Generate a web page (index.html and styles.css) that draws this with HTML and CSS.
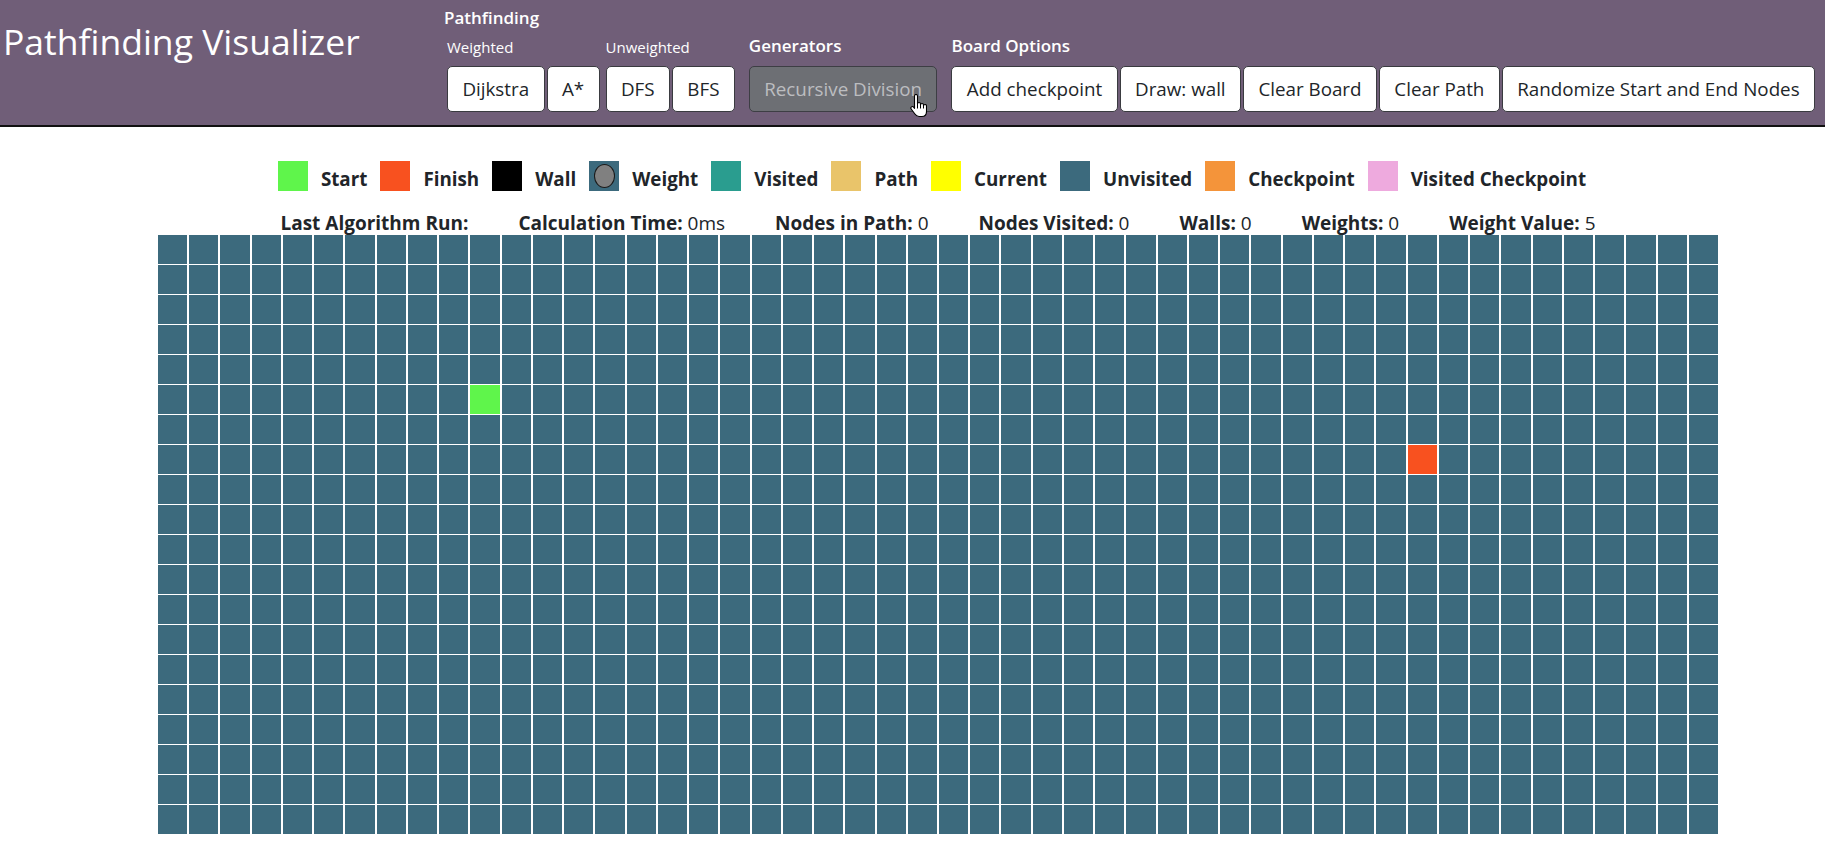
FILE: index.html
```html
<!DOCTYPE html>
<html lang="en">
<head>
<meta charset="utf-8">
<title>Pathfinding Visualizer</title>
<link rel="stylesheet" href="styles.css">
</head>
<body>
<header class="navbar">
  <div class="brand">Pathfinding Visualizer</div>
  <div class="group group-path">
    <div class="group-title">Pathfinding</div>
    <div class="subgroups">
      <div class="subgroup">
        <div class="sub-title">Weighted</div>
        <div class="btn-row">
          <button class="btn">Dijkstra</button>
          <button class="btn">A*</button>
        </div>
      </div>
      <div class="subgroup">
        <div class="sub-title">Unweighted</div>
        <div class="btn-row">
          <button class="btn">DFS</button>
          <button class="btn">BFS</button>
        </div>
      </div>
    </div>
  </div>
  <div class="group group-gen">
    <div class="group-title">Generators</div>
    <div class="btn-row">
      <button class="btn btn-disabled">Recursive Division
        <svg class="cursor" viewBox="0 0 18 24" width="18" height="24" aria-hidden="true">
          <path d="M5.5 2a1.5 1.5 0 0 1 3 0v8a1.5 1.5 0 0 1 3 0v1a1.5 1.5 0 0 1 3 0v1a1.5 1.5 0 0 1 3 0v5.5c0 3-1.8 5-4.5 5H10c-2 0-3.2-1-4.3-2.7L2.2 15a1.5 1.5 0 0 1 2.4-1.8l0.9 1.1Z" fill="#fff" stroke="#000" stroke-width="1.1" stroke-linejoin="round"/>
          <path d="M8.5 10v4.5M11.5 11v3.5M14.5 12v2.5" stroke="#000" stroke-width="1" fill="none"/>
        </svg>
      </button>
    </div>
  </div>
  <div class="group group-board">
    <div class="group-title">Board Options</div>
    <div class="btn-row">
      <button class="btn">Add checkpoint</button>
      <button class="btn">Draw: wall</button>
      <button class="btn">Clear Board</button>
      <button class="btn">Clear Path</button>
      <button class="btn">Randomize Start and End Nodes</button>
    </div>
  </div>
</header>

<main class="main">
  <div class="legend">
    <div class="legend-item"><span class="swatch sw-start"></span><span class="legend-label">Start</span></div>
    <div class="legend-item"><span class="swatch sw-finish"></span><span class="legend-label">Finish</span></div>
    <div class="legend-item"><span class="swatch sw-wall"></span><span class="legend-label">Wall</span></div>
    <div class="legend-item"><span class="swatch sw-weight"><span class="weight-dot"></span></span><span class="legend-label">Weight</span></div>
    <div class="legend-item"><span class="swatch sw-visited"></span><span class="legend-label">Visited</span></div>
    <div class="legend-item"><span class="swatch sw-path"></span><span class="legend-label">Path</span></div>
    <div class="legend-item"><span class="swatch sw-current"></span><span class="legend-label">Current</span></div>
    <div class="legend-item"><span class="swatch sw-unvisited"></span><span class="legend-label">Unvisited</span></div>
    <div class="legend-item"><span class="swatch sw-checkpoint"></span><span class="legend-label">Checkpoint</span></div>
    <div class="legend-item"><span class="swatch sw-vcheckpoint"></span><span class="legend-label">Visited Checkpoint</span></div>
  </div>

  <div class="stats">
    <div class="stat"><b>Last Algorithm Run:</b></div>
    <div class="stat"><b>Calculation Time:</b> 0ms</div>
    <div class="stat"><b>Nodes in Path:</b> 0</div>
    <div class="stat"><b>Nodes Visited:</b> 0</div>
    <div class="stat"><b>Walls:</b> 0</div>
    <div class="stat"><b>Weights:</b> 0</div>
    <div class="stat"><b>Weight Value:</b> 5</div>
  </div>

  <div class="board" id="board"></div>
</main>
<script src="script.js"></script>
</body>
</html>
```
FILE: styles.css
```css
* { box-sizing: border-box; }

html, body {
  margin: 0;
  padding: 0;
  overflow: hidden;
}

body {
  font-family: "Open Sans", "Noto Sans", "Liberation Sans", sans-serif;
  color: #212529;
  background: #fff;
}

/* ---------- header ---------- */
.navbar {
  display: flex;
  align-items: flex-end;
  height: 127px;
  padding-bottom: 13px;
  background: #705e78;
  border-bottom: 2px solid #111;
}

.brand {
  align-self: flex-start;
  flex: 0 0 443px;
  padding-top: 17px;
  padding-left: 3px;
  font-size: 35.5px;
  line-height: 48px;
  color: #fff;
  white-space: nowrap;
}

.group {
  display: flex;
  flex-direction: column;
  align-items: flex-start;
}

.group-gen { margin-left: 14px; }
.group-board { margin-left: 14px; }

.group-title {
  font-size: 17px;
  line-height: 20px;
  font-weight: 600;
  color: #fff;
  margin-bottom: 10.5px;
  white-space: nowrap;
}

.group-path .group-title { margin-bottom: 9.5px; margin-left: 1px; }

.subgroups {
  display: flex;
  gap: 6px;
  margin-left: 4px;
}

.sub-title {
  font-size: 15px;
  line-height: 18px;
  font-weight: 500;
  color: #fff;
  margin-bottom: 10.5px;
}

.btn-row {
  display: flex;
  gap: 2px;
}

.btn {
  position: relative;
  height: 46px;
  padding: 0 14.4px;
  border: 1px solid #3a3b40;
  border-radius: 5px;
  background: #fff;
  color: #212529;
  font-family: inherit;
  font-size: 18.8px;
  line-height: 1;
  white-space: nowrap;
  cursor: pointer;
}

.btn-disabled {
  background: #6d6f74;
  color: #bcbdc0;
  border-color: #3d3e44;
}

.cursor {
  position: absolute;
  left: 159px;
  top: 27px;
}

/* ---------- legend ---------- */
.legend {
  display: flex;
  justify-content: center;
  align-items: flex-end;
  gap: 13px;
  margin-top: 34px;
  padding-left: 39px;
}

.legend-item {
  display: flex;
  align-items: flex-end;
  gap: 13px;
}

.swatch {
  display: flex;
  align-items: center;
  justify-content: center;
  width: 30px;
  height: 30px;
}

.legend-label {
  font-size: 18.8px;
  line-height: 24px;
  font-weight: 700;
  white-space: nowrap;
}

.sw-start { background: #5ff54b; }
.sw-finish { background: #f8511f; }
.sw-wall { background: #000; }
.sw-weight { background: #3c6a7d; }
.sw-visited { background: #2a9d8f; }
.sw-path { background: #e9c46a; }
.sw-current { background: #ffff00; }
.sw-unvisited { background: #3c6a7d; }
.sw-checkpoint { background: #f4943a; }
.sw-vcheckpoint { background: #eeaade; }

.weight-dot {
  width: 21px;
  height: 24px;
  border-radius: 50%;
  background: #808080;
  border: 1.5px solid #1a1a1a;
}

/* ---------- stats ---------- */
.stats {
  display: flex;
  justify-content: center;
  gap: 50px;
  margin-top: 20px;
  padding-left: 51px;
  font-size: 19px;
  line-height: 24px;
  white-space: nowrap;
}

.stat b { font-weight: 700; }

/* ---------- board ---------- */
.board {
  display: grid;
  grid-template-columns: repeat(50, 1fr);
  grid-auto-rows: 29px;
  column-gap: 2px;
  row-gap: 1px;
  width: 1560px;
  margin-left: 158px;
  background: #fff;
}

.cell { background: #3c6a7d; }
.cell.start { background: #5ff54b; }
.cell.finish { background: #f8511f; }
```
FILE: script.js
```js
(function () {
  var board = document.getElementById('board');
  var rows = 20, cols = 50;
  var frag = document.createDocumentFragment();
  for (var r = 0; r < rows; r++) {
    for (var c = 0; c < cols; c++) {
      var d = document.createElement('div');
      d.className = 'cell';
      if (r === 5 && c === 10) d.className += ' start';
      if (r === 7 && c === 40) d.className += ' finish';
      frag.appendChild(d);
    }
  }
  board.appendChild(frag);
})();
```
